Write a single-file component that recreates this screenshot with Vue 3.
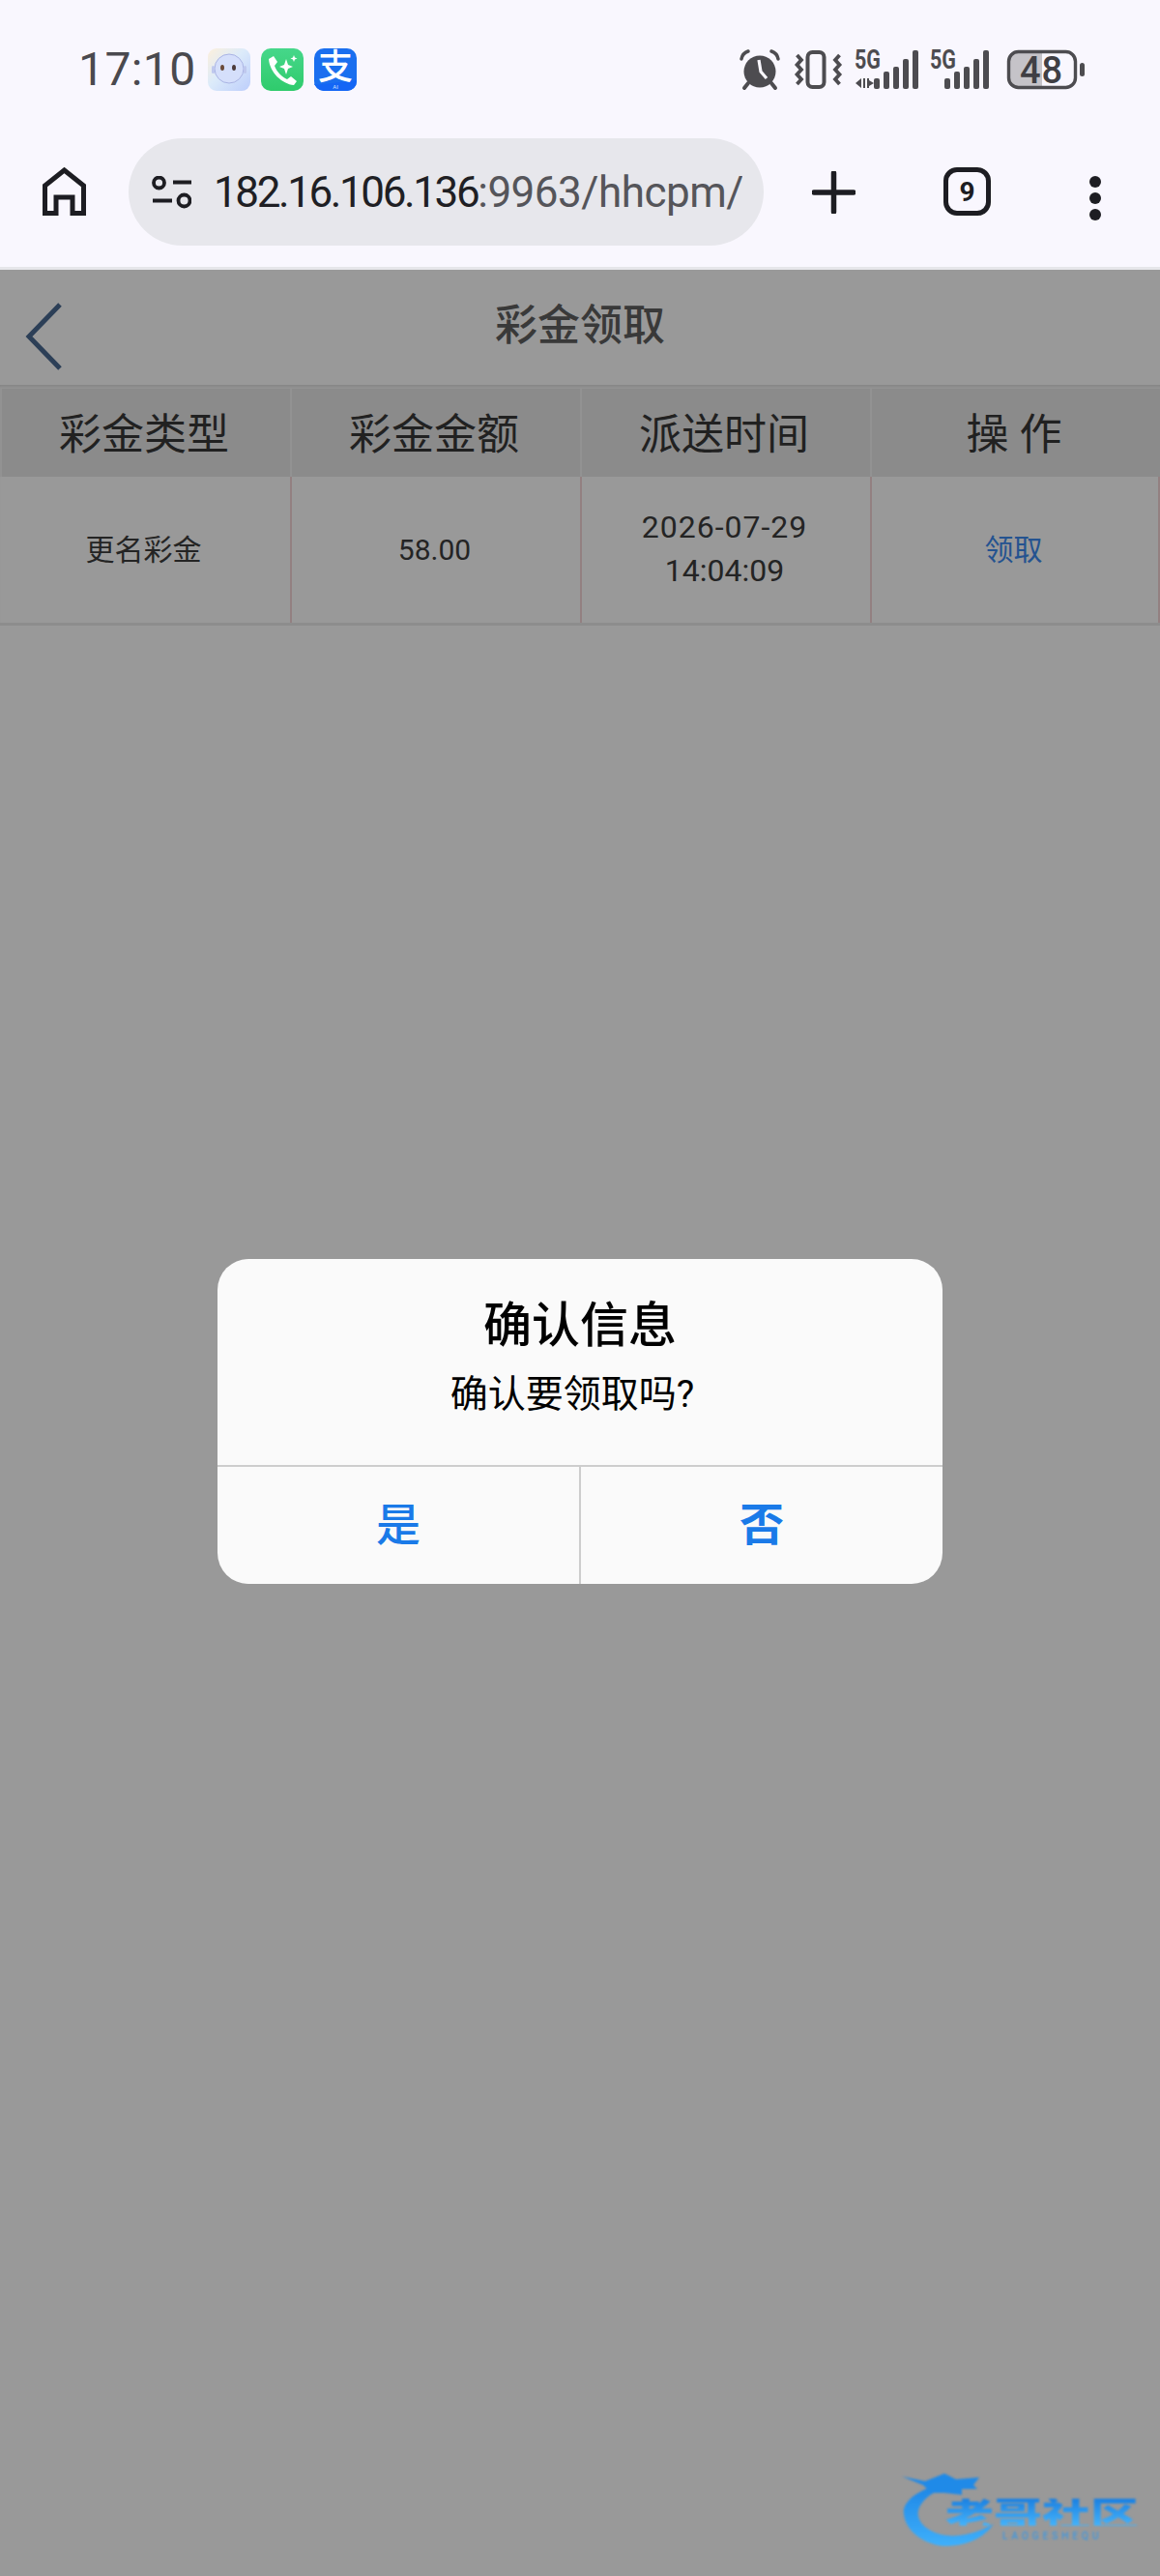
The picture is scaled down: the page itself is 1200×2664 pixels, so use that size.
<template>
  <div class="screen">
    <!-- barra de estado -->
    <div class="status">
      <span class="time">17:10</span>
      <div class="apps">
        <svg width="44" height="44" viewBox="0 0 44 44">
          <defs>
            <linearGradient id="botBg" x1="0" y1="0" x2="1" y2="1">
              <stop offset="0" stop-color="#fdf0dc" />
              <stop offset="0.45" stop-color="#dcebfa" />
              <stop offset="1" stop-color="#bccdfb" />
            </linearGradient>
          </defs>
          <rect width="44" height="44" rx="9" fill="url(#botBg)" />
          <circle cx="22" cy="21" r="15" fill="#d5dffb" stroke="#aab4e4" stroke-width="1" />
          <rect x="4" y="18" width="3" height="8" rx="1.5" fill="#bfc8ee" />
          <rect x="37" y="18" width="3" height="8" rx="1.5" fill="#bfc8ee" />
          <ellipse cx="15" cy="20" rx="2" ry="3" fill="#6b4b3a" />
          <ellipse cx="27" cy="20" rx="2" ry="3" fill="#4c3b3a" />
        </svg>
        <svg width="44" height="44" viewBox="0 0 44 44">
          <defs>
            <linearGradient id="callBg" x1="0" y1="0" x2="0" y2="1">
              <stop offset="0" stop-color="#46d78a" />
              <stop offset="1" stop-color="#2fcb6c" />
            </linearGradient>
          </defs>
          <rect width="44" height="44" rx="10" fill="url(#callBg)" />
          <path d="M8 11 L13 8 L17 14 L14 18 C16 24 22 30 27 32 L31 29 L37 34 L34 38 C22 37 9 25 8 11 Z" fill="#fff" />
          <path d="M26 11 L28 17 L33 19 L28 21 L26 27 L24 21 L19 19 L24 17 Z" fill="#fff" />
          <path d="M34 7 L35 9.500 L37.500 10.500 L35 11.500 L34 14 L33 11.500 L30.500 10.500 L33 9.500 Z" fill="#fff" />
        </svg>
        <svg width="44" height="44" viewBox="0 0 44 44">
          <rect width="44" height="44" rx="10" fill="#1a6fef" />
          <path d="M0 38 L44 33 V34 A10 10 0 0 1 34 44 H10 A10 10 0 0 1 0 34 Z" fill="#1466f5" />
          <text x="22" y="32" text-anchor="middle" class="zhi">支</text>
          <text x="22" y="42" text-anchor="middle" class="ai">AI</text>
        </svg>
      </div>
      <div class="sys">
        <svg width="40" height="40" viewBox="0 0 40 40" class="sys-alarm">
          <circle cx="20" cy="22" r="16.5" fill="#4d4c50" />
          <path d="M19 10 L21 22 L27 29" fill="none" stroke="#f9f7fe" stroke-width="3.2" />
          <path d="M1 9 Q2 3 8 1 M39 9 Q38 3 32 1" fill="none" stroke="#4d4c50" stroke-width="3.5" stroke-linecap="round" />
          <path d="M8 34 L4 39 M32 34 L36 39" stroke="#4d4c50" stroke-width="4" stroke-linecap="round" />
        </svg>
        <svg width="49" height="40" viewBox="0 0 49 40" class="sys-vib">
          <rect x="13.500" y="2" width="17" height="36" rx="5" fill="none" stroke="#4d4c50" stroke-width="4" />
          <path d="M2.500 5 L7 10 L2.500 15 L7 20 L2.500 25 L7 30 L2.500 35" fill="none" stroke="#4d4c50" stroke-width="3.800" />
          <path d="M46.500 5 L42 10 L46.500 15 L42 20 L46.500 25 L42 30 L46.500 35" fill="none" stroke="#4d4c50" stroke-width="3.800" />
        </svg>
        <svg width="67" height="40" viewBox="0 0 67 40" class="sys-sig1">
          <text x="0" y="19" class="fiveg" textLength="27" lengthAdjust="spacingAndGlyphs">5G</text>
          <path d="M7 29 L1 34 L7 39 Z M9 29 H11 V39 H9 Z M13 29 H15 L15 39 H13 Z M15 31 L20 34 L15 37 Z" fill="#4d4c50" />
          <g fill="#4d4c50">
            <rect v-for="b in bars" :key="b.x" :x="b.x + 20" :y="b.y" width="6" :height="40 - b.y" rx="2" />
          </g>
        </svg>
        <svg width="62" height="40" viewBox="0 0 62 40" class="sys-sig2">
          <text x="0" y="19" class="fiveg" textLength="27" lengthAdjust="spacingAndGlyphs">5G</text>
          <g fill="#4d4c50">
            <rect v-for="b in bars" :key="b.x" :x="b.x + 15" :y="b.y" width="6" :height="40 - b.y" rx="2" />
          </g>
        </svg>
        <svg width="80" height="40" viewBox="0 0 80 40" class="sys-batt">
          <rect x="3" y="3" width="33" height="34" fill="#c5c3c8" />
          <rect x="1.500" y="1.500" width="69" height="37" rx="10" fill="none" stroke="#4d4c50" stroke-width="3.400" />
          <rect x="75" y="13" width="5" height="14" rx="2.500" fill="#4d4c50" />
          <text x="35.500" y="33.500" text-anchor="middle" class="batt-num">48</text>
        </svg>
      </div>
    </div>

    <!-- barra del navegador -->
    <div class="toolbar">
      <svg width="45" height="50" viewBox="0 0 45 50" class="home">
        <path d="M2.500 47.500 V19 L22.500 3 L42.500 19 V47.500 H31 V31 H14 V47.500 Z" fill="none" stroke="#1d1d22" stroke-width="5" />
      </svg>
      <div class="pill">
        <svg width="41" height="34" viewBox="0 0 41 34" class="tune">
          <circle cx="7.500" cy="7" r="5.500" fill="none" stroke="#1d1d22" stroke-width="3.800" />
          <path d="M22 6.500 H41 M1 25.500 H21" stroke="#1d1d22" stroke-width="4" />
          <circle cx="33.500" cy="25.500" r="6" fill="none" stroke="#1d1d22" stroke-width="3.800" />
        </svg>
        <div class="url"><span class="host">182.16.106.136</span>:9963/hhcpm/index</div>
      </div>
      <svg width="45" height="44" viewBox="0 0 45 44" class="plus">
        <path d="M22.500 2 V42 M2 22 H43" stroke="#1d1d22" stroke-width="5.500" stroke-linecap="round" />
      </svg>
      <div class="tabs">9</div>
      <svg width="12" height="46" viewBox="0 0 12 46" class="dots">
        <circle cx="6" cy="6" r="6" fill="#1d1d22" />
        <circle cx="6" cy="23" r="6" fill="#1d1d22" />
        <circle cx="6" cy="40" r="6" fill="#1d1d22" />
      </svg>
    </div>

    <!-- pagina -->
    <div class="page">
      <div class="head">
        <svg width="40" height="70" viewBox="0 0 40 70" class="back">
          <path d="M36 2 L4 35 L36 68" fill="none" stroke="#4a6a92" stroke-width="5" />
        </svg>
        <span class="head-title">彩金领取</span>
      </div>
      <div class="table">
        <div class="row row-head">
          <div v-for="h in headers" :key="h" class="th">{{ h }}</div>
        </div>
        <div class="row row-body">
          <div class="td">更名彩金</div>
          <div class="td">58.00</div>
          <div class="td date"><span class="date-day">2026-07-29</span><br />14:04:09</div>
          <div class="td link">领取</div>
        </div>
      </div>

      <!-- capa modal -->
      <div class="mask">
        <div class="dialog">
          <div class="dialog-body">
            <div class="dialog-title">确认信息</div>
            <div class="dialog-msg">确认要领取吗?</div>
          </div>
          <div class="dialog-btns">
            <div class="btn">是</div>
            <div class="btn btn-no">否</div>
          </div>
        </div>
      </div>

      <!-- marca de agua -->
      <div class="mark">
        <svg width="250" height="76" viewBox="0 0 250 76">
          <defs>
            <linearGradient id="markGrad" x1="0" y1="0" x2="0" y2="1">
              <stop offset="0" stop-color="#1d86e6" />
              <stop offset="1" stop-color="#3fb0fb" />
            </linearGradient>
          </defs>
          <path d="M38 12 C12 18 0 32 2 42 C4 62 28 76 48 75 C68 74 86 66 95 52 C82 60 62 66 46 64 C28 62 14 50 17 38 C20 28 30 20 42 16 Z" fill="url(#markGrad)" />
          <path d="M0 3 L24 8 L44 0 L56 6 L80 4 L74 12 L78 16 L62 16 L62 22 L44 20 L30 20 L22 12 Z" fill="#1f8ae8" />
        </svg>
        <div class="mark-title">老哥社区</div>
        <div class="mark-sub">LAOGESHEQU</div>
      </div>
    </div>
  </div>
</template>

<script setup>
const headers = ['彩金类型', '彩金金额', '派送时间', '操 作']

// alturas de las barras de señal
const bars = [
  { x: 0, y: 29 },
  { x: 10, y: 22 },
  { x: 20, y: 17 },
  { x: 30, y: 9 },
  { x: 40, y: 0 },
]
</script>

<style>
html,
body {
  margin: 0;
  background: #f9f7fe;
}
</style>

<style scoped>
.screen {
  width: 1200px;
  height: 2664px;
  display: flex;
  flex-direction: column;
  overflow: hidden;
  background: #f9f7fe;
  font-family: Roboto, "Noto Sans CJK SC", sans-serif;
}

.status {
  height: 143px;
  flex: none;
  display: flex;
  align-items: center;
  padding: 0 78px 0 81px;
  box-sizing: border-box;
}

.status svg {
  overflow: visible;
}

.time {
  font-size: 48px;
  color: #4a494e;
  line-height: 1;
  letter-spacing: 0.4px;
}

.apps {
  display: flex;
  gap: 11px;
  margin-left: 12px;
}

.zhi {
  font-family: "Noto Sans CJK SC", sans-serif;
  font-size: 36px;
  font-weight: 500;
  fill: #fff;
}

.ai {
  font-size: 6px;
  fill: #cfe0ff;
}

.sys {
  margin-left: auto;
  display: flex;
  align-items: center;
}

.sys-vib {
  margin-left: 16px;
}

.sys-sig1 {
  margin-left: 13px;
}

.sys-sig2 {
  margin-left: 11px;
}

.sys-batt {
  margin-left: 18px;
}

.fiveg {
  font-size: 27px;
  font-weight: 700;
  fill: #4d4c50;
}

.batt-num {
  font-size: 38px;
  font-weight: 500;
  fill: #403f44;
  letter-spacing: 1px;
}

.toolbar {
  height: 136px;
  flex: none;
  box-sizing: border-box;
  display: flex;
  align-items: flex-start;
  padding-left: 44px;
  border-bottom: 3px solid #e6e6ea;
}

.home {
  margin: 30px 44px 0 0;
}

.pill {
  width: 657px;
  height: 111px;
  border-radius: 56px;
  background: #e7e7ec;
  display: flex;
  align-items: center;
  padding-left: 24px;
  box-sizing: border-box;
}

.tune {
  flex: none;
}

.url {
  width: 547px;
  margin-left: 23px;
  overflow: hidden;
  white-space: nowrap;
  font-size: 44px;
  letter-spacing: -0.5px;
  color: #55555a;
}

.host {
  color: #1f1f24;
  letter-spacing: -2.4px;
}

.plus {
  margin: 34px 0 0 50px;
}

.tabs {
  width: 49px;
  height: 50px;
  margin: 30px 0 0 91px;
  box-sizing: border-box;
  border: 5px solid #1d1d22;
  border-radius: 14px;
  display: flex;
  align-items: center;
  justify-content: center;
  font-size: 28px;
  font-weight: 700;
  color: #1d1d22;
}

.dots {
  margin: 39px 0 0 102px;
}

.page {
  flex: 1;
  position: relative;
  background: #fff;
}

.head {
  height: 119px;
  box-sizing: border-box;
  display: flex;
  justify-content: center;
  padding-top: 28px;
  background: #ffffff;
}

.back {
  position: absolute;
  left: 26px;
  top: 34px;
}

.head-title {
  font-size: 44px;
  line-height: 60px;
  font-weight: 500;
  color: #5f5f5f;
}

.table {
  padding-top: 4px;
  box-shadow: inset 0 5px 4px -3px #d8d8d8;
}

.row {
  display: grid;
  grid-template-columns: repeat(4, 1fr);
}

.row-head {
  height: 91px;
  background: #e8e8e8;
}

.th {
  display: flex;
  align-items: center;
  justify-content: center;
  padding: 0 4px 4px 0;
  box-sizing: border-box;
  font-size: 44px;
  color: #373737;
  border-left: 2px solid #f4f4f4;
}

.row-body {
  height: 154px;
  border-bottom: 3px solid #ececec;
  box-sizing: border-box;
}

.td {
  display: flex;
  align-items: center;
  justify-content: center;
  text-align: center;
  padding-right: 3px;
  font-size: 30px;
  line-height: 45px;
  color: #3c3c3c;
  border-left: 2px solid #f6d5d8;
}

.td:first-child {
  border-left: none;
}

.td:last-child {
  border-right: 2px solid #f6d5d8;
}

.date {
  display: block;
  padding-top: 30px;
  font-size: 32px;
}

.date-day {
  letter-spacing: 1px;
}

.link {
  color: #3c8af0;
}

.mask {
  position: absolute;
  inset: 0;
  padding-bottom: 3px;
  box-sizing: border-box;
  background: rgba(0, 0, 0, 0.4);
  display: flex;
  align-items: center;
  justify-content: center;
}

.dialog {
  width: 750px;
  height: 336px;
  border-radius: 32px;
  background: #fafafa;
  display: flex;
  flex-direction: column;
  overflow: hidden;
}

.dialog-body {
  flex: 1;
  text-align: center;
  padding-top: 36px;
  box-sizing: border-box;
  color: #000;
}

.dialog-title {
  font-size: 50px;
  line-height: 66px;
  font-weight: 500;
}

.dialog-msg {
  font-size: 39px;
  line-height: 56px;
  margin-top: 10px;
  padding-right: 16px;
}

.dialog-btns {
  height: 123px;
  display: flex;
  border-top: 2px solid #cdcdcd;
  box-sizing: border-box;
}

.btn {
  flex: 1;
  display: flex;
  align-items: center;
  justify-content: center;
  padding-bottom: 10px;
  font-size: 46px;
  font-weight: 500;
  color: #1a7ae8;
}

.btn-no {
  border-left: 2px solid #cdcdcd;
  font-weight: 700;
}

.mark {
  position: absolute;
  left: 933px;
  top: 2279px;
  width: 250px;
  height: 76px;
  filter: blur(0.8px);
}

.mark svg {
  display: block;
}

.mark-title {
  position: absolute;
  left: 45px;
  top: 20px;
  font-family: "Noto Sans CJK SC", sans-serif;
  font-size: 50px;
  line-height: 40px;
  font-weight: 900;
  white-space: nowrap;
  background: linear-gradient(#1a7fe0, #45b4fb);
  -webkit-background-clip: text;
  background-clip: text;
  color: transparent;
  transform: scaleY(0.72);
}

.mark-sub {
  position: absolute;
  left: 104px;
  top: 60px;
  font-size: 10px;
  line-height: 10px;
  letter-spacing: 4px;
  white-space: nowrap;
  color: #2a97f0;
}
</style>
